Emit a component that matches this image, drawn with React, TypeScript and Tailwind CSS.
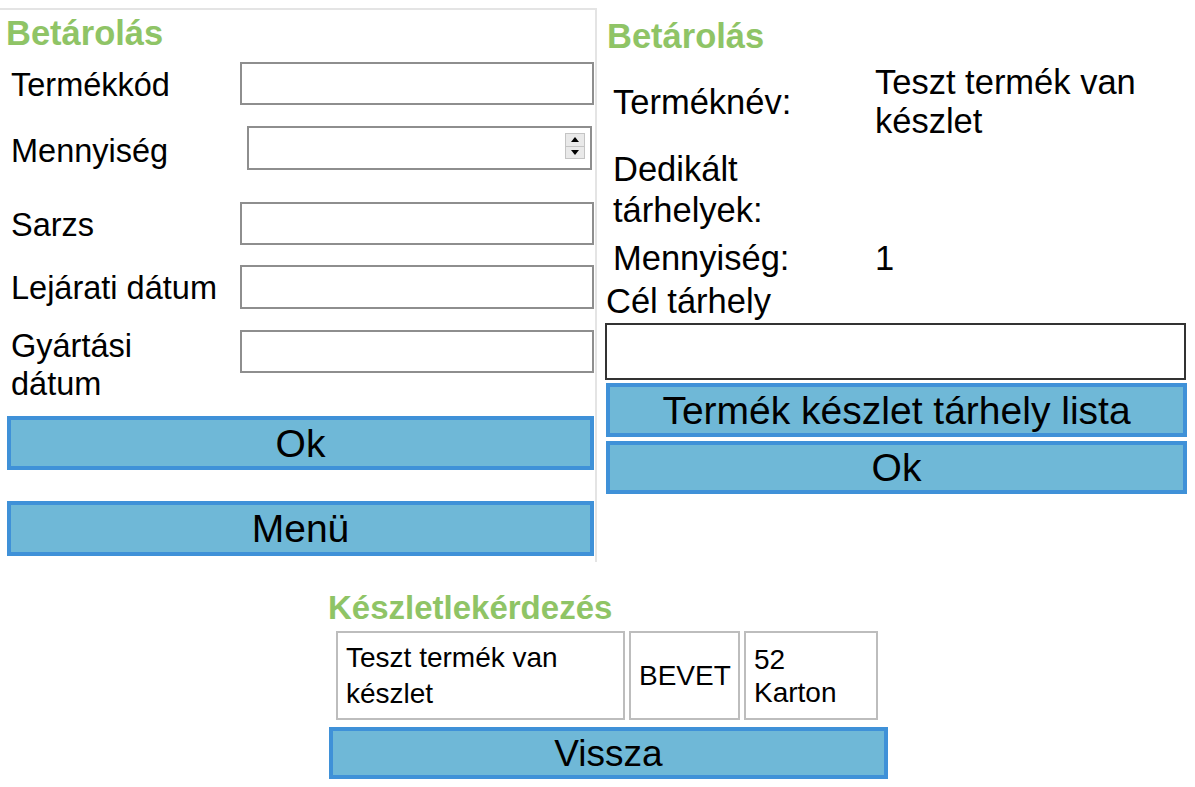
import React from "react";

function Field({ className = "" }: { className?: string }) {
    return <input type="text" className={`block min-w-0 bg-white border-2 border-[#8e8e8e] outline-none ${className}`} />;
}

function BlueButton({ children, className = "" }: { children: React.ReactNode; className?: string }) {
    return (
        <button className={`flex items-center justify-center bg-[#6fb8d7] border-4 border-[#3f91d8] text-black leading-none ${className}`}>
            {children}
        </button>
    );
}

function Spinner() {
    return (
        <div className="absolute right-[7px] top-[7px] w-[20px] h-[26px] flex flex-col border border-[#c4c4c4] bg-[#e9e9e9]">
            <div className="flex-1 flex items-center justify-center border-b border-[#c4c4c4]">
                <div className="w-0 h-0 border-l-[4px] border-r-[4px] border-b-[5px] border-l-transparent border-r-transparent border-b-black" />
            </div>
            <div className="flex-1 flex items-center justify-center">
                <div className="w-0 h-0 border-l-[4px] border-r-[4px] border-t-[5px] border-l-transparent border-r-transparent border-t-black" />
            </div>
        </div>
    );
}

export default function App() {
    const heading = "font-bold text-[#8fc466] text-[34.5px] leading-[39px]";

    return (
        <div className="w-[1195px] h-[787px] bg-white text-black [font-family:'Liberation_Sans',Arial,sans-serif] overflow-hidden">
            <div className="flex">
                {/* left: Betárolás form */}
                <div className="w-[597px] shrink-0 mt-[8px] border-t-2 border-r-2 border-[#e4e4e4] pb-[6px] text-[32.5px]">
                    <div className={`${heading} ml-[6px] mt-[4px]`}>Betárolás</div>

                    <div className="flex items-center h-[43px] mt-[9px]">
                        <div className="w-[240px] shrink-0 pl-[11px] leading-[37px] pt-[4px]">Termékkód</div>
                        <Field className="flex-1 h-full mr-[1px]" />
                    </div>

                    <div className="flex items-center h-[44px] mt-[21px]">
                        <div className="w-[247px] shrink-0 pl-[11px] leading-[37px] pt-[6px]">Mennyiség</div>
                        <div className="relative flex-1 h-full mr-[3px]">
                            <Field className="w-full h-full" />
                            <Spinner />
                        </div>
                    </div>

                    <div className="flex items-center h-[43px] mt-[32px]">
                        <div className="w-[240px] shrink-0 pl-[11px] leading-[37px] pt-[3px]">Sarzs</div>
                        <Field className="flex-1 h-full mr-[1px]" />
                    </div>

                    <div className="flex items-center h-[44px] mt-[20px]">
                        <div className="w-[240px] shrink-0 pl-[11px] leading-[37px] pt-[3px] whitespace-nowrap">Lejárati dátum</div>
                        <Field className="flex-1 h-full mr-[1px]" />
                    </div>

                    <div className="flex items-start mt-[17px]">
                        <div className="w-[240px] shrink-0 pl-[11px] leading-[38px] pt-[1px]">Gyártási<br />dátum</div>
                        <Field className="flex-1 h-[43px] mt-[4px] mr-[1px]" />
                    </div>

                    <BlueButton className="w-[587px] h-[54px] ml-[7px] mt-[13px] text-[39px]">Ok</BlueButton>
                    <BlueButton className="w-[587px] h-[55px] ml-[7px] mt-[31px] text-[39px]">Menü</BlueButton>
                </div>

                {/* right: Betárolás details */}
                <div className="flex-1 pl-[9px] pr-[7px] text-[34.5px]">
                    <div className={`${heading} mt-[17px] ml-[1px]`}>Betárolás</div>

                    <div className="grid grid-cols-[262px_1fr] gap-y-[8px] items-center pl-[7px] mt-[7px] leading-[39px]">
                        <div>Terméknév:</div>
                        <div>Teszt termék van készlet</div>
                        <div className="leading-[41px]">Dedikált tárhelyek:</div>
                        <div></div>
                        <div>Mennyiség:</div>
                        <div>1</div>
                    </div>

                    <div className="leading-[39px] mt-[4px]">Cél tárhely</div>
                    <input type="text" className="block w-[581px] h-[57px] mt-[2px] -ml-[1px] border-2 border-[#333] outline-none" />
                    <BlueButton className="w-[581px] h-[54px] mt-[3px] text-[39px]">Termék készlet tárhely lista</BlueButton>
                    <BlueButton className="w-[581px] h-[53px] mt-[4px] text-[39px]">Ok</BlueButton>
                </div>
            </div>

            {/* bottom: Készletlekérdezés */}
            <div className="ml-[328px] mt-[27px] w-[560px]">
                <div className="font-bold text-[#8fc466] text-[33px] leading-[38px]">Készletlekérdezés</div>
                <div className="flex gap-[4px] ml-[8px] mt-[4px] text-[28px]">
                    <div className="w-[289px] h-[89px] border-2 border-[#bdbdbd] flex items-center pl-[8px] leading-[36px]">
                        Teszt termék van<br />készlet
                    </div>
                    <div className="w-[111px] h-[89px] border-2 border-[#bdbdbd] flex items-center pl-[8px]">BEVET</div>
                    <div className="w-[134px] h-[89px] border-2 border-[#bdbdbd] flex items-center pl-[8px] leading-[33px]">
                        52<br />Karton
                    </div>
                </div>
                <BlueButton className="w-[559px] h-[52px] ml-[1px] mt-[7px] text-[37px]">Vissza</BlueButton>
            </div>
        </div>
    );
}
